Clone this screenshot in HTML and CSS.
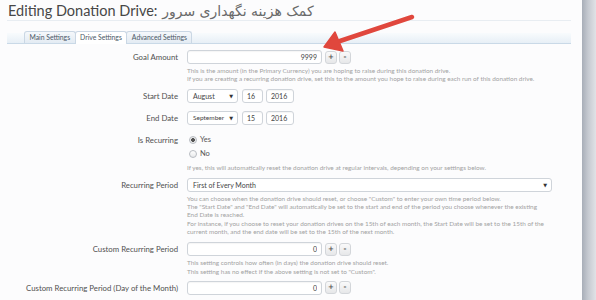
FILE: index.html
```html
<!DOCTYPE html>
<html lang="en">

<head>
    <meta charset="UTF-8">
    <meta name="viewport" content="width=device-width, initial-scale=1.0">
    <title>Editing Donation Drive</title>
    <link rel="stylesheet" href="styles.css">
</head>

<body>
    <div class="page">
        <div class="main">
            <h1 class="title">Editing Donation Drive: <span class="title-fa" dir="rtl">کمک هزینه نگهداری سرور</span></h1>

            <div class="tabs-wrap">
                <ul class="tabs">
                    <li>Main Settings</li>
                    <li class="active">Drive Settings</li>
                    <li>Advanced Settings</li>
                </ul>
            </div>

            <form class="form">
                <div class="row gap-sm">
                    <label class="lbl">Goal Amount</label>
                    <div class="ctrl">
                        <div class="spin">
                            <input class="num" type="text" value="9999">
                            <button type="button" class="spin-btn">+</button>
                            <button type="button" class="spin-btn">-</button>
                        </div>
                        <p class="help">This is the amount (in the Primary Currency) you are hoping to raise during this donation drive.<br>
                            If you are creating a recurring donation drive, set this to the amount you hope to raise during each run of this donation drive.</p>
                    </div>
                </div>

                <div class="row gap-lg">
                    <label class="lbl">Start Date</label>
                    <div class="ctrl date">
                        <div class="select month"><span>August</span><span class="caret">▼</span></div>
                        <input class="day" type="text" value="16">
                        <input class="year" type="text" value="2016">
                    </div>
                </div>

                <div class="row gap-lg">
                    <label class="lbl">End Date</label>
                    <div class="ctrl date">
                        <div class="select month"><span class="small">September</span><span class="caret">▼</span></div>
                        <input class="day" type="text" value="15">
                        <input class="year" type="text" value="2016">
                    </div>
                </div>

                <div class="row">
                    <label class="lbl">Is Recurring</label>
                    <div class="ctrl">
                        <label class="radio"><input type="radio" name="rec" checked> Yes</label>
                        <label class="radio"><input type="radio" name="rec"> No</label>
                        <p class="help">If yes, this will automatically reset the donation drive at regular intervals, depending on your settings below.</p>
                    </div>
                </div>

                <div class="row">
                    <label class="lbl">Recurring Period</label>
                    <div class="ctrl">
                        <div class="select wide"><span>First of Every Month</span><span class="caret">▼</span></div>
                        <p class="help">You can choose when the donation drive should reset, or choose "Custom" to enter your own time period below.<br>
                            The "Start Date" and "End Date" will automatically be set to the start and end of the period you choose whenever the existing<br>
                            End Date is reached.<br>
                            For instance, if you choose to reset your donation drives on the 15th of each month, the Start Date will be set to the 15th of the<br>
                            current month, and the end date will be set to the 15th of the next month.</p>
                    </div>
                </div>

                <div class="row gap-sm">
                    <label class="lbl">Custom Recurring Period</label>
                    <div class="ctrl">
                        <div class="spin">
                            <input class="num" type="text" value="0">
                            <button type="button" class="spin-btn">+</button>
                            <button type="button" class="spin-btn">-</button>
                        </div>
                        <p class="help">This setting controls how often (in days) the donation drive should reset.<br>
                            This setting has no effect if the above setting is not set to "Custom".</p>
                    </div>
                </div>

                <div class="row">
                    <label class="lbl">Custom Recurring Period (Day of the Month)</label>
                    <div class="ctrl">
                        <div class="spin">
                            <input class="num" type="text" value="0">
                            <button type="button" class="spin-btn">+</button>
                            <button type="button" class="spin-btn">-</button>
                        </div>
                        <p class="help">This setting controls what day of the month the donation drive should be reset at.</p>
                    </div>
                </div>
            </form>
        </div>
        <div class="edge"></div>
    </div>

    <!-- annotation arrow drawn over the page -->
    <svg class="arrow" width="596" height="300" viewBox="0 0 596 300">
        <line x1="412" y1="17" x2="340" y2="41" stroke="#e0473d" stroke-width="4.5" stroke-linecap="round" />
        <polygon points="324,47 335,32 343,51" fill="#e0473d" stroke="#e0473d" stroke-width="1.5" stroke-linejoin="round" />
    </svg>
</body>

</html>
```

FILE: styles.css
```css
body {
    margin: 0;
    padding: 0;
    background-color: #fcfcfd;
    font-family: Lato, "Liberation Sans", sans-serif;
    color: #555;
}

.page {
    display: flex;
    height: 300px;
    overflow: hidden;
}

.main {
    flex: 1;
    min-width: 0;
}

.edge {
    width: 14px;
    background: linear-gradient(to right, #a8aeb8, #c6cad1 45%, #e0e2e6);
}

.title {
    margin: 0;
    padding: 2px 0 0 8px;
    height: 18px;
    line-height: 18px;
    font-size: 14.5px;
    font-weight: normal;
    color: #474747;
    white-space: nowrap;
}

.title-fa {
    font-family: "DejaVu Sans", sans-serif;
    font-size: 14px;
    color: #6a6a6a;
    margin-left: 1px;
}

.tabs-wrap {
    margin: 0 11px 0 7px;
    border-top: 1px solid #e8edf2;
    padding-top: 10px;
}

.tabs {
    display: flex;
    list-style-type: none;
    margin: 0;
    padding: 0 0 0 17px;
    height: 12px;
    background: linear-gradient(to bottom, transparent 2px, #f8fbfd 2px, #e7eff6);
    border-bottom: 1px solid #c9d9e7;
}

.tabs li {
    height: 11px;
    line-height: 11px;
    padding: 0 4.5px;
    font-size: 6.8px;
    color: #4b5866;
    border: 1px solid #cad7e4;
    border-bottom: none;
    border-radius: 3px 3px 0 0;
    background: linear-gradient(to bottom, #f5f8fb, #e3ebf3);
    margin-right: -1px;
}

.tabs li.active {
    background: #fff;
    height: 12px;
    position: relative;
    z-index: 1;
}

.form {
    padding-top: 6px;
}

.row {
    display: grid;
    grid-template-columns: 178px 1fr;
    column-gap: 9px;
    align-items: start;
    margin-bottom: 6px;
}

.row.gap-sm {
    margin-bottom: 5px;
}

.row.gap-lg {
    margin-bottom: 8px;
}

.lbl {
    text-align: right;
    font-size: 7.8px;
    line-height: 14px;
    color: #505050;
    white-space: nowrap;
}

.ctrl {
    min-width: 0;
}

.help {
    margin: 3px 0 0;
    font-size: 6.4px;
    line-height: 8.3px;
    color: #a2a2a2;
    white-space: nowrap;
}

input[type="text"] {
    box-sizing: border-box;
    height: 14px;
    margin: 0;
    padding: 0 4px;
    border: 1px solid #cfd4da;
    border-radius: 3px;
    background-color: #fff;
    box-shadow: inset 0 1px 1px rgba(0, 0, 0, 0.04);
    font-family: Lato, "Liberation Sans", sans-serif;
    font-size: 7px;
    color: #444;
}

.spin {
    display: flex;
    align-items: center;
    gap: 2px;
}

.num {
    width: 135px;
    text-align: right;
    margin-right: 1px !important;
}

.spin-btn {
    width: 12px;
    height: 13px;
    padding: 0;
    border: 1px solid #d3d6da;
    border-radius: 3px;
    background: linear-gradient(to bottom, #fafafa, #e6e7e9);
    font-family: "DejaVu Sans", sans-serif;
    font-size: 7px;
    font-weight: bold;
    line-height: 11px;
    color: #555;
}

.date {
    display: flex;
    gap: 3px;
}

.select {
    box-sizing: border-box;
    height: 14px;
    display: flex;
    align-items: center;
    justify-content: space-between;
    padding: 0 4px 0 5px;
    border: 1px solid #cfd4da;
    border-radius: 3px;
    background-color: #fff;
    font-size: 7px;
    color: #444;
}

.select .small {
    font-size: 6.5px;
}

.caret {
    font-family: "DejaVu Sans", sans-serif;
    font-size: 5px;
    color: #333;
}

.month {
    width: 51px;
    margin-right: 1px;
}

.day {
    width: 21px;
}

.year {
    width: 28px;
}

.wide {
    width: 365px;
}

.radio {
    display: flex;
    align-items: center;
    gap: 3px;
    height: 14px;
    font-size: 7.5px;
    color: #555;
    padding-left: 2px;
}

.radio input {
    appearance: none;
    box-sizing: border-box;
    width: 8px;
    height: 8px;
    margin: 0;
    border: 1px solid #b8bcc2;
    border-radius: 50%;
    background: linear-gradient(to bottom, #fff, #e8e9eb);
}

.radio input:checked {
    background: radial-gradient(circle, #555 0 1.6px, #eceded 2.2px);
}

.arrow {
    position: absolute;
    top: 0;
    left: 0;
    pointer-events: none;
}
```
